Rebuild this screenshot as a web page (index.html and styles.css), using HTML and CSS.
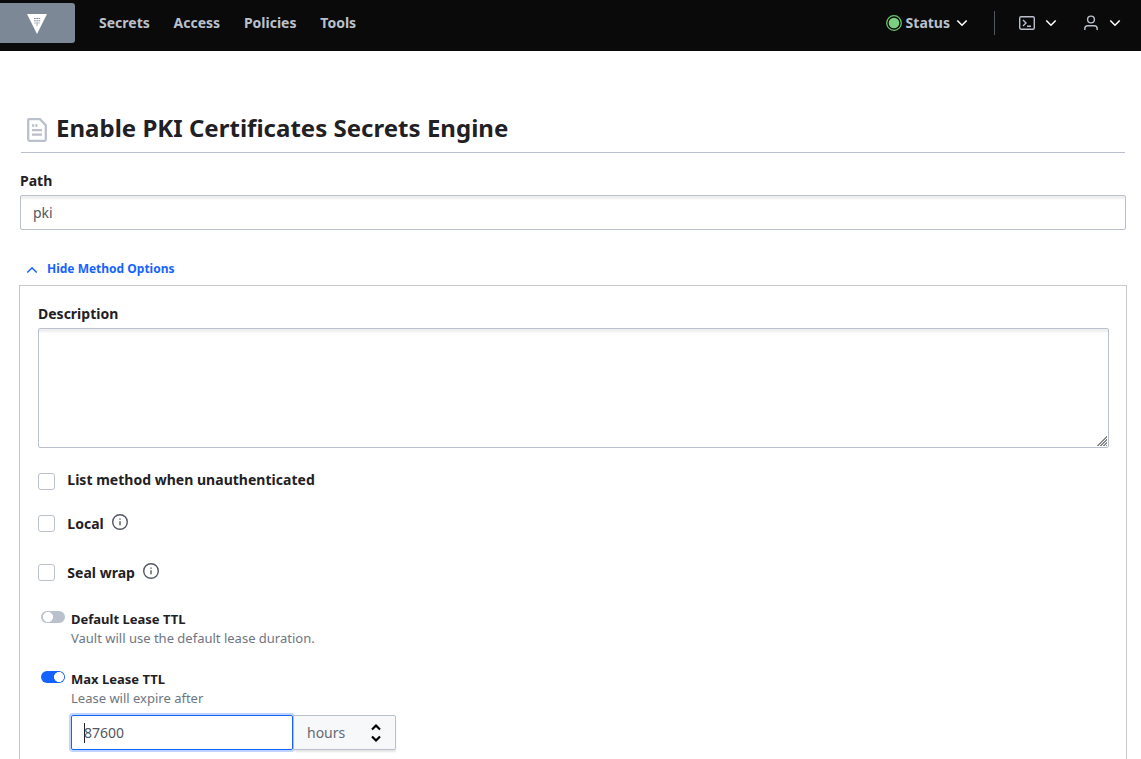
FILE: index.html
```html
<!DOCTYPE html>
<html lang="en">
<head>
<meta charset="utf-8">
<title>Vault</title>
<link rel="stylesheet" href="styles.css">
</head>
<body>
<header class="nav">
  <a class="logo"><svg width="20" height="20" viewBox="0 0 20 20"><path d="M0 0h20L10 20z" fill="#fff"/><path d="M7 4.500h1.700M9.300 4.500h1.700M11.500 4.500h1.700M7 6.800h1.700M9.300 6.800h1.700M11.500 6.800h1.700M7.500 9h1.200M9.300 9h1.700M11.500 9h1M9.300 11h1.500" stroke="#7d8897" stroke-width="1"/></svg></a>
  <nav class="links"><a>Secrets</a><a>Access</a><a>Policies</a><a>Tools</a></nav>
  <div class="tools">
    <div class="status"><svg width="16" height="16" viewBox="0 0 16 16"><circle cx="8" cy="8" r="7.300" fill="none" stroke="#6bc46f" stroke-width="1.300"/><circle cx="8" cy="8" r="5.300" fill="#7bd07f"/></svg><span>Status</span><svg class="chev" width="12" height="8" viewBox="0 0 12 8"><path d="M1.300 1.500L6 6.200l4.700-4.700"/></svg></div>
    <i class="divider"></i>
    <div class="console"><svg class="icon" width="16" height="16" viewBox="0 0 16 16"><rect x=".7" y="1.700" width="14.600" height="12.600" rx="1.500"/><path d="M4 5l3 3-3 3M8 11.300h4"/></svg><svg class="chev" width="12" height="8" viewBox="0 0 12 8"><path d="M1.300 1.500L6 6.200l4.700-4.700"/></svg></div>
    <div class="user"><svg class="icon" width="16" height="16" viewBox="0 0 16 16"><circle cx="8" cy="4.500" r="3.400"/><path d="M1.800 15v-1.200a3 3 0 0 1 3-3h6.400a3 3 0 0 1 3 3V15"/></svg><svg class="chev" width="12" height="8" viewBox="0 0 12 8"><path d="M1.300 1.500L6 6.200l4.700-4.700"/></svg></div>
  </div>
</header>
<main class="page">
  <h1 class="title"><svg width="20" height="24" viewBox="0 0 20 24"><path d="M2 1.200h11l5.800 6v14.300a1.300 1.300 0 0 1-1.300 1.300h-15a1.300 1.300 0 0 1-1.300-1.300V2a.8.8 0 0 1 .8-.8z"/><path d="M5 7.500h2.200M8.300 7.500h2.200M5 12.200h10M5 16.700h10"/></svg><span>Enable PKI Certificates Secrets Engine</span></h1>
  <label class="label path-label" for="path">Path</label>
  <input class="input" id="path" value="pki">
  <button class="toggle-options"><svg width="12" height="8" viewBox="0 0 12 8"><path d="M1.300 6.500L6 1.800l4.700 4.700"/></svg><span>Hide Method Options</span></button>
  <section class="options">
    <label class="label" for="desc">Description</label>
    <textarea class="input textarea" id="desc"></textarea>
    <div class="check first"><i class="box"></i><span>List method when unauthenticated</span></div>
    <div class="check"><i class="box"></i><span>Local</span><svg class="info" width="16" height="16" viewBox="0 0 16 16"><circle cx="8" cy="8" r="7.300"/><path d="M8 7.200v4M8 4.400v1.300"/></svg></div>
    <div class="check last"><i class="box"></i><span>Seal wrap</span><svg class="info" width="16" height="16" viewBox="0 0 16 16"><circle cx="8" cy="8" r="7.300"/><path d="M8 7.200v4M8 4.400v1.300"/></svg></div>
    <div class="ttl"><i class="switch"></i><div class="ttl-body"><div class="ttl-name">Default Lease TTL</div><div class="ttl-help">Vault will use the default lease duration.</div></div></div>
    <div class="ttl"><i class="switch on"></i><div class="ttl-body"><div class="ttl-name">Max Lease TTL</div><div class="ttl-help">Lease will expire after</div>
      <div class="duration"><div class="amount"><i class="caret"></i>87600</div><div class="unit"><span>hours</span><svg width="12" height="20" viewBox="0 0 12 20"><path d="M2 6.500l4-4 4 4M2 13.500l4 4 4-4"/></svg></div></div></div></div>
  </section>
</main>
</body>
</html>
```
FILE: styles.css
```css
* { box-sizing: border-box; }
html { overflow: hidden; }
body {
  margin: 0;
  height: 759px;
  overflow: hidden;
  background: #fff;
  color: #1f2124;
  font-family: "Noto Sans", sans-serif;
  font-size: 14px;
}
svg { display: block; flex: none; fill: none; }
.nav {
  display: flex;
  height: 51px;
  padding: 3px 20px 8px 0;
  background: #0a0a0a;
  color: #bac1cc;
  font-weight: 700;
}
.logo {
  width: 75px;
  height: 40px;
  padding: 11px 0 0 27px;
  background: #7d8897;
  border-radius: 0 3px 3px 0;
}
.links { display: flex; align-items: center; gap: 23.8px; margin-left: 24px; padding-bottom: 1px; }
.tools { display: flex; align-items: center; margin-left: auto; }
.status, .console, .user { display: flex; align-items: center; }
.status span { margin: 0 6px 0 4px; padding-bottom: 1px; }
.divider { width: 1px; height: 24px; margin: 0 24px 0 26px; background: #525761; }
.console, .user { gap: 10px; }
.user { margin-left: 26px; }
.chev { stroke: #fff; stroke-width: 1.6; }
.icon { stroke: #bac1cc; stroke-width: 1.4; }
.page { height: 708px; overflow: hidden; padding: 61px 15px 0 20px; }
.title {
  display: flex;
  align-items: center;
  gap: 9px;
  height: 41px;
  margin: 0 1px;
  padding: 0 0 7px 6px;
  border-bottom: 1px solid #bac1cc;
  font-size: 24px;
  font-weight: 700;
  line-height: 32px;
}
.title span { padding-bottom: 2px; letter-spacing: .02px; }
.title svg { stroke: #bac1cc; stroke-width: 2.3; margin-top: 2px; }
.label { display: block; font-weight: 700; line-height: 20px; }
.path-label { margin: 18px 0 4px; }
.input {
  display: block;
  width: 100%;
  height: 35px;
  padding: 0 12px;
  border: 1px solid #bac1cc;
  border-radius: 2px;
  box-shadow: inset 0 4px 2px -1px #efefef;
  background: #fff;
  color: #525761;
  font: 14px "Noto Sans", sans-serif;
  outline: 0;
}
.toggle-options {
  display: flex;
  align-items: center;
  gap: 9px;
  height: 20px;
  margin: 29px 0 6px 6px;
  padding: 0;
  border: 0;
  background: none;
  color: #1563ff;
  font: 700 12px "Noto Sans", sans-serif;
}
.toggle-options span { padding-bottom: 2px; }
.toggle-options svg { stroke: #1563ff; stroke-width: 1.5; margin-top: 2px; }
.options {
  height: 520px;
  margin: 0 -1px;
  padding: 18px 17px 0 18px;
  border: 1px solid #c8c8c8;
}
.textarea { height: 120px; margin-top: 4px; resize: vertical; }
.textarea::-webkit-resizer {
  background:
    linear-gradient(135deg, #fff 50%, transparent 50%) no-repeat right 1px bottom 1px / 11px 11px,
    repeating-linear-gradient(135deg, #888 0 1px, #fff 1px 2.12px) no-repeat right 1px bottom 1px / 11px 11px;
}
.check {
  display: flex;
  align-items: flex-start;
  height: 49px;
  font-weight: 700;
  line-height: 20px;
}
.check.first { height: 44px; margin-top: 22px; }
.check.last { height: 48px; }
.check span { letter-spacing: .02px; }
.box { width: 17px; height: 17px; margin: 1px 12.3px 0 0; border: 1px solid #bac1cc; border-radius: 3px; }
.check.first .box { margin-top: 3px; }
.info { margin: 0 0 0 8.3px; stroke: #525761; stroke-width: 1.4; }
.ttl { display: flex; gap: 6px; height: 60px; padding-left: 3px; }
.ttl-body { margin-top: -1px; }
.switch {
  width: 24px;
  height: 12px;
  border-radius: 6px;
  background: radial-gradient(circle at 7px 6px, #fff 4.7px, #bac1cc 5.3px);
}
.switch.on { background: radial-gradient(circle at 18px 6px, #fff 4.7px, #1563ff 5.3px); }
.ttl-name { font-size: 13px; font-weight: 700; line-height: 18px; }
.ttl-help { color: #6f7682; font-size: 13px; line-height: 20px; }
.duration { display: flex; margin-top: 7px; }
.amount {
  display: flex;
  align-items: center;
  width: 222px;
  height: 35px;
  padding-left: 12px;
  border: 1px solid #1563ff;
  border-radius: 2px;
  box-shadow: 0 0 0 2px #bfd4ff;
  color: #525761;
}
.caret { width: 1px; height: 20px; margin-right: -1px; background: #1f2124; }
.unit {
  display: flex;
  align-items: center;
  justify-content: space-between;
  width: 103px;
  height: 35px;
  padding: 0 13px;
  border: 1px solid #bac1cc;
  border-radius: 0 2px 2px 0;
  background: #f7f8fa;
  box-shadow: 1px 3px 2px -1px #e4e4e4;
  color: #656a76;
}
.unit svg { stroke: #000; stroke-width: 2.2; }
```
